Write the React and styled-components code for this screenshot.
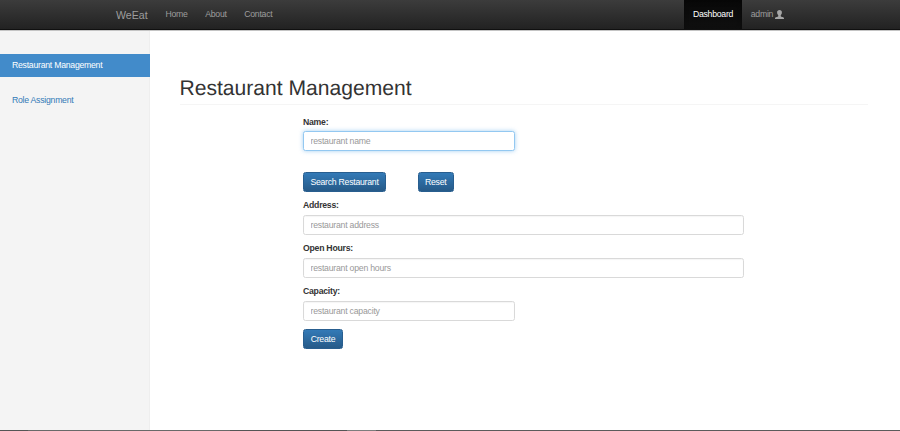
import React from 'react';
import styled, { createGlobalStyle } from 'styled-components';

const GlobalStyle = createGlobalStyle`
  *, *::before, *::after { box-sizing: border-box; }
  body {
    margin: 0;
    background: #fff;
    color: #333;
    font: 8.7px/10px "Liberation Sans", Arial, sans-serif;
    letter-spacing: -0.25px;
    overflow: hidden;
  }
`;

const Page = styled.div`
  display: flex;
  flex-direction: column;
  height: 431px;
`;

const Navbar = styled.nav`
  display: flex;
  flex: none;
  height: 30px;
  margin-bottom: 1px;
  padding: 0 107px;
  background: linear-gradient(#3c3c3c, #222);
  border-bottom: 1px solid #101010;
  box-shadow: 0 1px 0 #c4c4c4;
`;

const Brand = styled.a`
  padding: 9px 9px 0;
  font-size: 10.6px;
  line-height: 12px;
  letter-spacing: 0;
  color: #9d9d9d;
`;

const NavLink = styled.a`
  display: flex;
  align-items: flex-start;
  gap: 2px;
  height: 29px;
  padding: 9px 8.8px 0;
  color: ${({ $active }) => ($active ? '#fff' : '#9d9d9d')};
  background: ${({ $active }) => ($active ? 'linear-gradient(#080808, #0f0f0f)' : 'none')};
  box-shadow: ${({ $active }) => ($active ? 'inset 0 2px 5px rgba(0, 0, 0, 0.25)' : 'none')};
`;

const NavRight = styled.div`
  display: flex;
  margin-left: auto;
`;

const UserGlyph = styled.svg`
  width: 9px;
  height: 9px;
  margin-top: 0.5px;
`;

const Body = styled.div`
  display: flex;
  flex: 1;
`;

const Sidebar = styled.aside`
  display: flex;
  flex-direction: column;
  flex: none;
  gap: 12px;
  width: 150px;
  padding-top: 23px;
  background: #f4f4f4;
  border-right: 1px solid #eee;
`;

const SideLink = styled.a`
  height: 23px;
  margin-right: -1px;
  padding: 6px 12px;
  color: ${({ $active }) => ($active ? '#fff' : '#337ab7')};
  background: ${({ $active }) => ($active ? '#428bca' : 'transparent')};
`;

const Main = styled.main`
  flex: 1;
  padding: 45px 32px 0 29.5px;
`;

const Title = styled.h1`
  height: 29px;
  margin: 0 0 12px;
  font-size: 21.1px;
  font-weight: 400;
  line-height: 26px;
  letter-spacing: 0;
  text-rendering: geometricPrecision;
  border-bottom: 1px solid #f5f5f5;
`;

const Form = styled.form`
  display: flex;
  flex-direction: column;
  align-items: flex-start;
  margin-left: 123.5px;
`;

const Field = styled.label`
  display: flex;
  flex-direction: column;
  gap: ${({ $gap }) => $gap}px;
  height: 43px;
  font-weight: 700;
`;

const Input = styled.input`
  width: ${({ $wide }) => ($wide ? '441px' : '212px')};
  height: 20px;
  padding: 0 6.5px;
  font: 400 8.7px "Liberation Sans", Arial, sans-serif;
  letter-spacing: -0.22px;
  background: #fff;
  border: 1px solid ${({ $highlight }) => ($highlight ? '#93c8f1' : '#d9d9d9')};
  border-radius: 2.5px;
  outline: none;
  box-shadow: ${({ $highlight }) =>
    $highlight ? '0 0 4px rgba(102, 175, 233, 0.6)' : 'inset 0 1px 1px rgba(0, 0, 0, 0.04)'};
  &::placeholder { color: #999; }
`;

const Actions = styled.div`
  display: flex;
  gap: 31.5px;
  margin: 12px 0 8px;
`;

const Button = styled.button`
  width: ${({ $width }) => $width}px;
  height: 20px;
  padding: 0 0 1px;
  font: 8.7px "Liberation Sans", Arial, sans-serif;
  letter-spacing: -0.25px;
  color: #fff;
  background: linear-gradient(#337ab7, #265a88);
  border: 1px solid #285e8f;
  border-radius: 2.5px;
`;

const TaskbarEdge = styled.footer`
  flex: none;
  height: 1px;
  background: linear-gradient(90deg, #555 28px, #696969 28px 230px, #555 230px 347px, #7d7d7d 347px 376px, #5b5b5b 376px);
`;

function TextField({ label, placeholder, wide, highlight, gap = 5 }) {
  return (
    <Field $gap={gap}>
      {label}
      <Input placeholder={placeholder} $wide={wide} $highlight={highlight} />
    </Field>
  );
}

export default function App() {
  return (
    <Page>
      <GlobalStyle />
      <Navbar>
        <Brand>WeEat</Brand>
        <NavLink>Home</NavLink>
        <NavLink>About</NavLink>
        <NavLink>Contact</NavLink>
        <NavRight>
          <NavLink $active>Dashboard</NavLink>
          <NavLink>
            admin
            <UserGlyph viewBox="0 0 18 18" fill="#a6a6a6" aria-hidden="true">
              <path d="M9 0C6 0 4.2 1.8 4.2 4.7c0 2.5.8 4.6 2.3 5.8v1.6c0 .8-.5 1.2-1.3 1.5L1.6 14.6C.6 15.1 0 15.7 0 16.7V18h18v-1.3c0-1-.6-1.6-1.6-2.1l-3.6-1c-.8-.3-1.3-.7-1.3-1.5v-1.6c1.5-1.2 2.3-3.3 2.3-5.8C13.8 1.8 12 0 9 0z" />
            </UserGlyph>
          </NavLink>
        </NavRight>
      </Navbar>
      <Body>
        <Sidebar>
          <SideLink $active>Restaurant Management</SideLink>
          <SideLink>Role Assignment</SideLink>
        </Sidebar>
        <Main>
          <Title>Restaurant Management</Title>
          <Form>
            <TextField label="Name:" placeholder="restaurant name" highlight gap={4} />
            <Actions>
              <Button type="button" $width={83}>Search Restaurant</Button>
              <Button type="button" $width={36.5}>Reset</Button>
            </Actions>
            <TextField label="Address:" placeholder="restaurant address" wide />
            <TextField label="Open Hours:" placeholder="restaurant open hours" wide />
            <TextField label="Capacity:" placeholder="restaurant capacity" />
            <Button type="button" $width={40}>Create</Button>
          </Form>
        </Main>
      </Body>
      <TaskbarEdge />
    </Page>
  );
}
